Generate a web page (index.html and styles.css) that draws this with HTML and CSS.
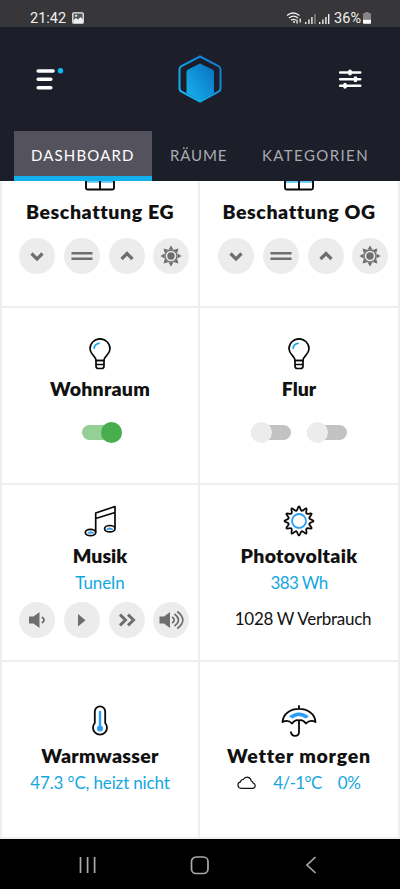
FILE: index.html
```html
<!DOCTYPE html>
<html lang="de">
<head>
<meta charset="utf-8">
<meta name="viewport" content="width=device-width">
<title>Dashboard</title>
<link rel="stylesheet" href="styles.css">
</head>
<body>
<svg class="defs" width="0" height="0">
  <defs>
    <linearGradient id="edge" x1="0" y1="1" x2="1" y2="0"><stop offset="0" stop-color="#12c0f8"/><stop offset="1" stop-color="#1272cc"/></linearGradient>
    <linearGradient id="fill" x1="0" y1="1" x2="1" y2="0"><stop offset="0" stop-color="#18b4ee"/><stop offset="1" stop-color="#086fc0"/></linearGradient>
    <symbol id="window" viewBox="0 0 32 32"><path d="M2 21h28v2.800H2z" fill="#5cc8f5"/><rect x="2" y="2" width="28" height="28.500" rx="1.500" fill="none" stroke="#080808" stroke-width="1.900"/><path d="M16 2v28" stroke="#080808" stroke-width="1.900"/></symbol>
    <symbol id="bulb" viewBox="0 0 32 32"><g fill="none" stroke="#080808" stroke-width="1.700" stroke-linejoin="round"><path d="M12 22.500C12 18 6 16.500 6 10.800a10 10 0 0 1 20 0C26 16.500 20 18 20 22.500z"/><path d="M12 22.500h8v5.500q0 2.500-2.500 2.500h-3q-2.500 0-2.500-2.500zM12 26.500h8"/></g><path d="M10 10.800q.5-5 5.700-5.600" fill="none" stroke="#14a9e8" stroke-width="1.700"/></symbol>
    <symbol id="down" viewBox="0 0 36 36"><path d="M12.500 15.500 18 21l5.500-5.500" fill="none" stroke="#6e6e6e" stroke-width="3.200"/></symbol>
    <symbol id="up" viewBox="0 0 36 36"><path d="M12.500 21 18 15.500l5.500 5.500" fill="none" stroke="#6e6e6e" stroke-width="3.200"/></symbol>
    <symbol id="stop" viewBox="0 0 36 36"><path d="M7.500 15.200h21M7.500 20.800h21" stroke="#6e6e6e" stroke-width="2.400"/></symbol>
    <symbol id="sun" viewBox="0 0 36 36"><circle cx="18" cy="18" r="3.700" fill="#6e6e6e"/><circle cx="18" cy="18" r="6" fill="none" stroke="#6e6e6e" stroke-width="1.300"/><g fill="#6e6e6e"><path id="ray" d="M15.600 11.500 18 7.500l2.400 4z"/><use href="#ray" transform="rotate(45 18 18)"/><use href="#ray" transform="rotate(90 18 18)"/><use href="#ray" transform="rotate(135 18 18)"/><use href="#ray" transform="rotate(180 18 18)"/><use href="#ray" transform="rotate(225 18 18)"/><use href="#ray" transform="rotate(270 18 18)"/><use href="#ray" transform="rotate(315 18 18)"/></g></symbol>
  </defs>
</svg>

<div class="status">
  <span class="time">21:42</span>
  <svg class="photo" width="12" height="12" viewBox="0 0 12 12"><rect x=".8" y=".8" width="10.400" height="10.400" rx="1" fill="#55555a" stroke="#eee" stroke-width="1.300"/><path d="M1.500 10V8l2.500-2 2 1.500L8.500 5 11 7.500V11H1.500z" fill="#eee"/><circle cx="4" cy="3.800" r="1.100" fill="#eee"/></svg>
  <span class="spacer"></span>
  <svg class="signal" width="49" height="16" viewBox="0 0 49 16"><g fill="none" stroke="#eee" stroke-width="1.300"><path d="M1 5.500q6-5 12.500 0M3 7.900q4.500-3.500 9 0M5 10.300q2.500-2 5 0"/><path d="M11 9.500v4M14.200 8.500v4" stroke-width="1.300"/></g><circle cx="8" cy="12" r="1" fill="#eee"/><g fill="#eee"><path d="M19 12h1.400v2H19zM22.200 9.500h1.400V14h-1.400zM25.200 7h1.400v7h-1.400zM33 12h1.400v2H33zM36.200 9.500h1.400V14h-1.400zM39.200 7h1.400v7h-1.400zM42 4h1.400v10H42z"/></g><path d="M28.200 4h1.400v10h-1.400z" fill="#88888b"/></svg>
  <span class="percent">36%</span>
  <svg class="battery" width="8" height="12" viewBox="0 0 8 12"><path d="M2.500 0h3v1H7q1 0 1 1v5H0V2q0-1 1-1h1.500z" fill="#858588"/><path d="M0 7.500h8V11q0 .7-.7.700H.7Q0 11.700 0 11z" fill="#fff"/></svg>
</div>

<header class="header">
  <div class="bar">
    <svg width="30" height="26" viewBox="0 0 30 26"><g stroke="#fff" stroke-width="3.600" stroke-linecap="round"><path d="M3.200 5h14.800M3.200 13.200H15.800M3.200 21.800H15.800" /></g><circle cx="25.500" cy="4.800" r="2.700" fill="#12b8f2"/></svg>
    <svg class="logo" width="46" height="50" viewBox="0 0 46 50"><path d="M23 2.500 41.500 12.200q2 1 2 3.200v19q0 2.200-2 3.200L23 47.500 4.500 37.600q-2-1-2-3.200v-19q0-2.200 2-3.200z" fill="none" stroke="url(#edge)" stroke-width="2"/><path d="M23 9.500 35.500 15.500q1.500.7 1.500 2.500v21l-14 7.500-13.500-7.500V18q0-1.800 1.500-2.500z" fill="url(#fill)"/></svg>
    <svg width="24" height="22" viewBox="0 0 24 22"><path d="M2.200 4.500h20M2.200 11.200h20M2.200 17.700h20" stroke="#fff" stroke-width="2.600" stroke-linecap="round"/><path d="M12 3.300v2.400M17.500 10V12.400M7 16.500v2.400" stroke="#fff" stroke-width="3.600" stroke-linecap="round"/></svg>
  </div>
  <nav class="tabs">
    <a class="tab active">DASHBOARD</a><a class="tab rooms">RÄUME</a><a class="tab categories">KATEGORIEN</a>
  </nav>
</header>

<main class="grid">
  <section class="card first">
    <svg class="icon"><use href="#window"/></svg>
    <h2 class="t-eg">Beschattung EG</h2>
    <div class="buttons"><svg><use href="#down"/></svg><svg><use href="#stop"/></svg><svg><use href="#up"/></svg><svg><use href="#sun"/></svg></div>
  </section>
  <section class="card first">
    <svg class="icon"><use href="#window"/></svg>
    <h2 class="t-og">Beschattung OG</h2>
    <div class="buttons"><svg><use href="#down"/></svg><svg><use href="#stop"/></svg><svg><use href="#up"/></svg><svg><use href="#sun"/></svg></div>
  </section>
  <section class="card light">
    <svg class="icon"><use href="#bulb"/></svg>
    <h2 class="t-room">Wohnraum</h2>
    <div class="toggles"><span class="toggle on"></span></div>
  </section>
  <section class="card light">
    <svg class="icon"><use href="#bulb"/></svg>
    <h2 class="t-hall">Flur</h2>
    <div class="toggles"><span class="toggle"></span><span class="toggle"></span></div>
  </section>
  <section class="card">
    <svg class="icon" viewBox="0 0 32 32"><g fill="none" stroke="#080808" stroke-width="1.700" stroke-linejoin="round"><path d="M11.700 27.500V8L31 1.500V23.500M11.700 13.500 31 7.500"/><ellipse cx="6.500" cy="27.500" rx="5.200" ry="3.200"/><ellipse cx="25.800" cy="23.700" rx="5.200" ry="3.200"/></g><path d="M3.800 28q3-2.600 6 0zM22.800 24.200q3-2.600 6 0z" fill="#2a9df4" stroke="#2a9df4"/></svg>
    <h2 class="t-music">Musik</h2>
    <p class="value v-tune">TuneIn</p>
    <div class="buttons">
      <svg viewBox="0 0 36 36"><path d="M10 14.500h4.500L20.500 10v16l-6-4.500H10z" fill="#6e6e6e"/><path d="M22.800 15q4.500 3 0 6" fill="none" stroke="#6e6e6e" stroke-width="1.800"/></svg>
      <svg viewBox="0 0 36 36"><path d="M14 12v12.500l7.500-6.250z" fill="#6e6e6e"/></svg>
      <svg viewBox="0 0 36 36"><path d="m11 12.700 5.500 5.300-5.500 5.300m8-10.600 5.500 5.300-5.500 5.300" fill="none" stroke="#6e6e6e" stroke-width="3"/></svg>
      <svg viewBox="0 0 36 36"><path d="M6.500 14.500H11L17 10v16l-6-4.500H6.500z" fill="#6e6e6e"/><path d="M19 15q4.500 3 0 6M21.500 12q8 6 0 12M24.300 9.500q11 8.500 0 17" fill="none" stroke="#6e6e6e" stroke-width="1.700"/></svg>
    </div>
  </section>
  <section class="card">
    <svg class="icon" viewBox="0 0 32 32"><g fill="none" stroke="#080808" stroke-width="1.800" stroke-linecap="round"><path id="petal" d="M13.200 5.570Q14.300 5.400 14.800 3.200 16-.3 17.200 3.200 17.700 5.400 18.800 5.570"/><use href="#petal" transform="rotate(30 16 16)"/><use href="#petal" transform="rotate(60 16 16)"/><use href="#petal" transform="rotate(90 16 16)"/><use href="#petal" transform="rotate(120 16 16)"/><use href="#petal" transform="rotate(150 16 16)"/><use href="#petal" transform="rotate(180 16 16)"/><use href="#petal" transform="rotate(210 16 16)"/><use href="#petal" transform="rotate(240 16 16)"/><use href="#petal" transform="rotate(270 16 16)"/><use href="#petal" transform="rotate(300 16 16)"/><use href="#petal" transform="rotate(330 16 16)"/></g><circle cx="16" cy="16" r="7" fill="none" stroke="#2a9df4" stroke-width="1.800"/></svg>
    <h2 class="t-pv">Photovoltaik</h2>
    <p class="value v-wh">383 Wh</p>
    <p class="usage">1028 W Verbrauch</p>
  </section>
  <section class="card last">
    <svg class="icon" viewBox="0 0 32 32"><path d="M10.800 6.500a5.200 5.200 0 0 1 10.400 0V18a7 7 0 1 1-10.400 0z" fill="none" stroke="#080808" stroke-width="1.800"/><path d="M16 7v16" stroke="#2a9df4" stroke-width="2.400" stroke-linecap="round"/><circle cx="16" cy="23.500" r="3" fill="#2a9df4"/></svg>
    <h2 class="t-water">Warmwasser</h2>
    <p class="value v-temp">47.3 °C, heizt nicht</p>
  </section>
  <section class="card last">
    <svg class="icon wide" viewBox="0 0 36 32"><path d="M8 11.500Q18 3.500 28 11.500L24.500 13.500Q18 8.500 11.500 13.500z" fill="#2a9df4"/><g fill="none" stroke="#080808" stroke-width="1.800" stroke-linejoin="round" stroke-linecap="round"><path d="M18 1v2.500M1.500 17C2.500 -0.500 33.500 -0.500 34.500 17Q29 14 25 18.500 21.500 14 18 15.500 14.500 14 11 18.500 7 14 1.500 17z"/><path d="M18 15.500V27q0 3.800-4 3.800-3.600 0-4-3.600"/></g></svg>
    <h2 class="t-weather">Wetter morgen</h2>
    <p class="value forecast"><svg width="19" height="14" viewBox="0 0 19 14"><path d="M4.500 12.300a3.300 3.300 0 0 1-1-6.500Q4 3.300 6.300 3.500 8 .7 11 1.300q3 .7 3.200 3.700 1.800.1 1.800 2 2.200.4 2.200 2.800 0 2.500-2.700 2.500z" fill="none" stroke="#111" stroke-width="1.200"/></svg><span class="v-range">4/-1°C</span><span class="v-rain">0%</span></p>
  </section>
</main>

<footer class="system">
  <svg width="18" height="18" viewBox="0 0 18 18"><path d="M1.500 1v16M8.600 1v16M15.600 1v16" stroke="#aaa" stroke-width="1.700"/></svg>
  <svg class="home" width="20" height="20" viewBox="0 0 20 20"><rect x="1.500" y="2" width="16.500" height="16.500" rx="4.500" fill="none" stroke="#aaa" stroke-width="1.700"/></svg>
  <svg width="12" height="18" viewBox="0 0 12 18"><path d="M10.500 1 2 9l8.500 8" fill="none" stroke="#aaa" stroke-width="1.700"/></svg>
</footer>
</body>
</html>
```
FILE: styles.css
```css
* { box-sizing: border-box; }
body { margin: 0; width: 400px; height: 889px; overflow: hidden; display: flex; flex-direction: column; background: #eee; color: #111; font-family: Lato, "Open Sans", sans-serif; }
svg { display: block; flex: none; }
.defs { position: absolute; }

.status { height: 27px; flex: none; display: flex; align-items: center; padding: 10px 29px 0 30px; background: #37373a; color: #f2f2f2; font: 14.5px/17px Roboto, sans-serif; }
.photo { margin: -2px 0 0 6px; }
.signal { margin-top: -2px; }
.battery { margin-top: -1px; }
.spacer { flex: 1; }
.percent { margin: 0 2px 0 -1px; }

.header { height: 154px; flex: none; background: #1c1e2a; display: flex; flex-direction: column; }
.bar { height: 104px; display: flex; justify-content: space-between; align-items: center; padding: 0 38px 0 35px; }
.logo { margin-right: 4px; }
.tabs { height: 50px; display: flex; padding-left: 14px; }
.tab { width: 138px; padding: 12px 0 0 17px; font-size: 15px; line-height: 24px; letter-spacing: 1.15px; color: #aaabb0; white-space: nowrap; }
.tab.active { background: #54535d; border-bottom: 5px solid #12b1ee; color: #fff; }
.tab.rooms { width: 93px; letter-spacing: .9px; padding-left: 18px; }
.tab.categories { flex: 1; letter-spacing: 1.4px; }

.grid { flex: none; height: 658px; display: grid; grid-template-columns: 196px 198px; grid-template-rows: 125px 175px 175px 175px; gap: 2px; padding-left: 2px; }
.card { background: #fff; overflow: hidden; display: flex; flex-direction: column; align-items: center; padding-top: 20px; }
.icon { width: 32px; height: 32px; }
.icon.wide { width: 36px; }
h2 { margin: 7px 0 0; font-size: 19.500px; line-height: 24px; font-weight: 800; white-space: nowrap; }
.t-eg, .t-og { letter-spacing: .6px; }
.t-room { letter-spacing: .25px; }
.t-pv, .t-water { letter-spacing: .3px; }
.t-weather { letter-spacing: .75px; }
.value { margin: 3px 0 0; font-size: 17px; line-height: 24px; color: #14a7df; white-space: nowrap; }
.v-tune { letter-spacing: -.1px; }
.v-wh { letter-spacing: -.6px; }
.v-temp { letter-spacing: -.15px; }
.usage { margin: 12px 0 0 8px; font-size: 17px; line-height: 24px; letter-spacing: -.3px; white-space: nowrap; }
.buttons { align-self: flex-start; display: flex; gap: 8.800px; margin: 7px 0 0 17px; }
.card:nth-child(2) .buttons { margin-left: 18px; }
.buttons svg { width: 36px; height: 36px; border-radius: 50%; background: #ececec; }

.first { padding-top: 0; }
.first .icon { margin-top: -22px; }
.first h2 { margin-top: 9px; }
.first .buttons { margin-top: 14px; }

.light { padding-top: 30px; }
.light h2 { margin-top: 7px; }
.toggles { display: flex; gap: 16px; margin-top: 21px; }
.toggle { position: relative; width: 40px; height: 21px; display: flex; align-items: center; }
.toggle::before { content: ""; width: 40px; height: 15px; border-radius: 8px; background: #c2c2c2; }
.toggle::after { content: ""; position: absolute; left: 0; top: 0; width: 21px; height: 21px; border-radius: 50%; background: #ececec; }
.toggle.on { margin-left: 4px; }
.toggle.on::before { background: #94cf96; }
.toggle.on::after { left: 19px; background: #48ad4d; }

.last { padding-top: 43px; }
.forecast { display: flex; align-items: center; }
.v-range { margin-left: 17px; letter-spacing: -.6px; }
.v-rain { margin-left: 16px; letter-spacing: -.3px; }

.system { flex: 1; background: #000; display: flex; align-items: center; justify-content: space-between; padding: 2px 83px 0 79px; }
.home { margin-right: 2px; }
```
